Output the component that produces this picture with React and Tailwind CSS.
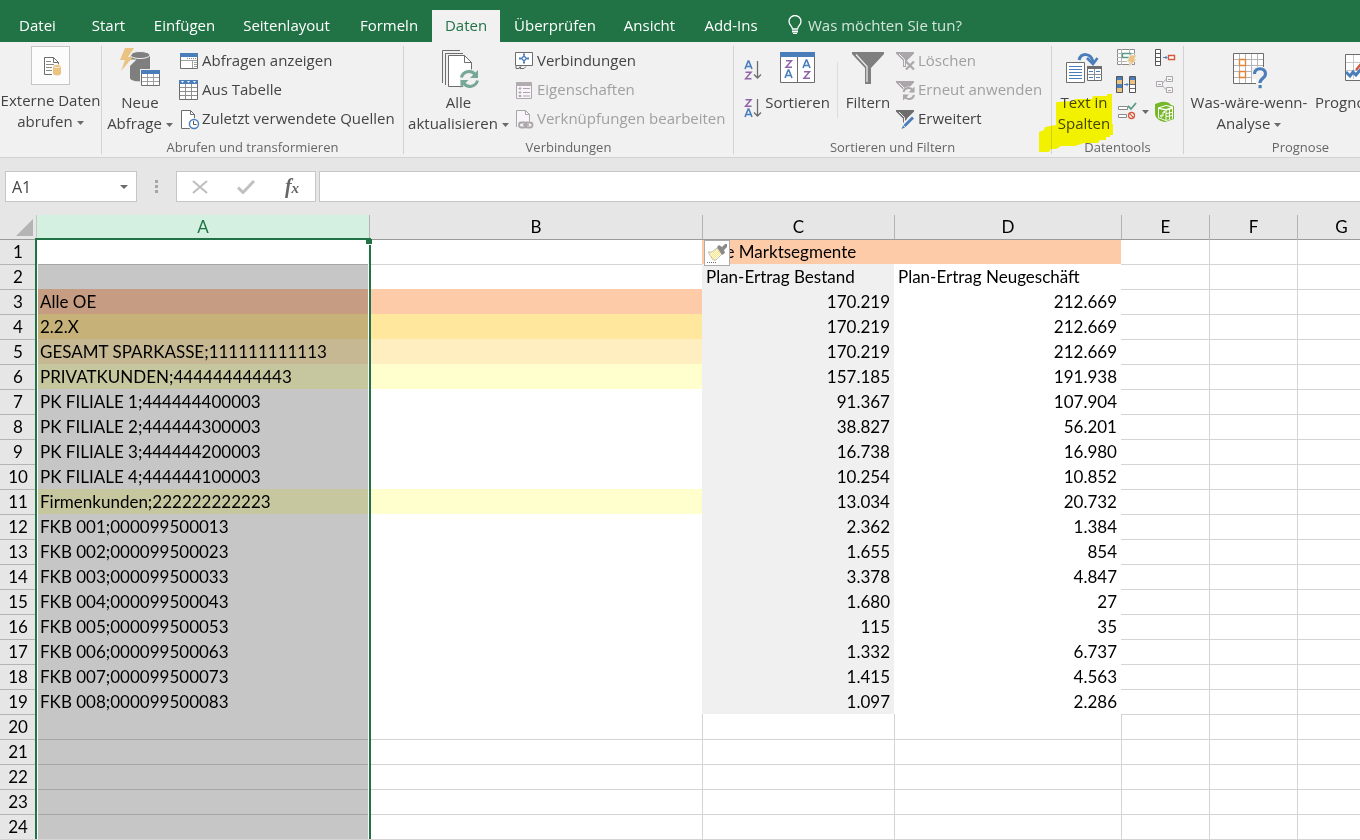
import React from 'react';

const tabs = [
  { name: 'Datei', style: 'w-[75px] bg-[#217346] text-white' },
  { name: 'Start', style: 'w-[67px] text-white' },
  { name: 'Einfügen', style: 'w-[85px] text-white' },
  { name: 'Seitenlayout', style: 'w-[119px] text-white' },
  { name: 'Formeln', style: 'w-[86px] text-white' },
  { name: 'Daten', style: 'w-[68px] bg-[#f1f1f1] text-[#217346]' },
  { name: 'Überprüfen', style: 'w-[110px] text-white' },
  { name: 'Ansicht', style: 'w-[79px] text-white' },
  { name: 'Add-Ins', style: 'w-[84px] text-white' },
];

const columns = ['A', 'B', 'C', 'D', 'E', 'F', 'G'];

const rows = [
  {},
  { c: 'Plan-Ertrag Bestand', d: 'Plan-Ertrag Neugeschäft' },
  { a: 'Alle OE', c: '170.219', d: '212.669', fillA: 'bg-[#c69c82]', fillB: 'bg-[#fecba8]' },
  { a: '2.2.X', c: '170.219', d: '212.669', fillA: 'bg-[#c6b279]', fillB: 'bg-[#ffe79d]' },
  { a: 'GESAMT SPARKASSE;111111111113', c: '170.219', d: '212.669', fillA: 'bg-[#c5b892]', fillB: 'bg-[#feeec0]' },
  { a: 'PRIVATKUNDEN;444444444443', c: '157.185', d: '191.938', fillA: 'bg-[#c6c69f]', fillB: 'bg-[#feffcd]' },
  { a: 'PK FILIALE 1;444444400003', c: '91.367', d: '107.904' },
  { a: 'PK FILIALE 2;444444300003', c: '38.827', d: '56.201' },
  { a: 'PK FILIALE 3;444444200003', c: '16.738', d: '16.980' },
  { a: 'PK FILIALE 4;444444100003', c: '10.254', d: '10.852' },
  { a: 'Firmenkunden;222222222223', c: '13.034', d: '20.732', fillA: 'bg-[#c6c69f]', fillB: 'bg-[#feffcd]' },
  { a: 'FKB 001;000099500013', c: '2.362', d: '1.384' },
  { a: 'FKB 002;000099500023', c: '1.655', d: '854' },
  { a: 'FKB 003;000099500033', c: '3.378', d: '4.847' },
  { a: 'FKB 004;000099500043', c: '1.680', d: '27' },
  { a: 'FKB 005;000099500053', c: '115', d: '35' },
  { a: 'FKB 006;000099500063', c: '1.332', d: '6.737' },
  { a: 'FKB 007;000099500073', c: '1.415', d: '4.563' },
  { a: 'FKB 008;000099500083', c: '1.097', d: '2.286' },
  {},
  {},
  {},
  {},
  {},
];

const Arrow = () => (
  <svg width="7" height="4" viewBox="0 0 7 4" className="ml-1 inline-block align-middle">
    <path d="M0 0h7L3.500 4z" fill="#6a6a6a" />
  </svg>
);

const ExternalDataIcon = () => (
  <svg width="39" height="39" viewBox="0 0 39 39">
    <rect x="0.500" y="0.500" width="38" height="38" fill="#fcfcfc" stroke="#c6c6c6" />
    <path d="M13.500 11.500h9l5 5v12h-14z" fill="#fff" stroke="#6d6d6d" />
    <path d="M22.500 11.500v5h5" fill="none" stroke="#6d6d6d" />
    <path d="M15 15.500h5M15 18.500h8M15 21.500h6M15 24.500h6" stroke="#8a8a8a" />
    <path d="M21 19h10v10H21z" fill="#fcfcfc" />
    <path d="M22 20v7.500c0 2.500 8 2.500 8 0V20z" fill="#eac282" />
    <ellipse cx="26" cy="20" rx="4" ry="1.500" fill="#eac282" stroke="#fff" strokeWidth="0.700" />
  </svg>
);

const NewQueryIcon = () => (
  <svg width="40" height="42" viewBox="0 0 40 42">
    <path d="M10 8v22c0 4.500 20 4.500 20 0V8z" fill="#7f7f7f" />
    <ellipse cx="20" cy="7" rx="10" ry="3.500" fill="#7f7f7f" stroke="#f1f1f1" />
    <path d="M4 0h12L8.500 11.500h8L0 28l4.500-13H0z" fill="#f1f1f1" />
    <path d="M5 0h9L8 9h5L1 23l4-11H0z" fill="#eac282" />
    <path d="M20 21h20v18H20z" fill="#f1f1f1" />
    <path d="M21.500 22.500h18v15h-18z" fill="#fff" stroke="#6d6d6d" />
    <path d="M21 22h19v4H21z" fill="#4a7ebb" />
    <path d="M22 29.500h17M22 33.500h17M27.500 26v11M33.500 26v11" stroke="#a0a0a0" />
  </svg>
);

const RefreshAllIcon = () => (
  <svg width="38" height="40" viewBox="0 0 38 40">
    <path d="M.500 33V.500H18" fill="none" stroke="#6d6d6d" />
    <path d="M3.500 35V3.500H21" fill="none" stroke="#6d6d6d" />
    <path d="M6.500 5.500h16l7 7v24h-23z" fill="#fff" stroke="#6d6d6d" />
    <path d="M22.500 5.500v7h7" fill="none" stroke="#6d6d6d" />
    <circle cx="27.500" cy="29" r="10" fill="#f1f1f1" />
    <path d="M19.500 27.500c1.500-6.500 10-8 14-2.500M35.500 30.500c-1.500 6.500-10 8-14 2.500" fill="none" stroke="#76a797" strokeWidth="3" />
    <path d="M36 20v8h-8zM18.500 38v-8h8z" fill="#76a797" />
  </svg>
);

const ShowQueriesIcon = () => (
  <svg width="24" height="24" viewBox="0 0 24 24">
    <path d="M2.500 4.500h17v15h-17z" fill="#fff" stroke="#6d6d6d" />
    <path d="M2 4h18v4H2z" fill="#4a7ebb" />
    <path d="M3 11.500h16M14.500 12v7" stroke="#a0a0a0" />
    <path d="M9 9.500h9" stroke="#8a8a8a" strokeDasharray="1 1" />
    <path d="M16 13.500h3M16 15.500h3M16 17.500h3" stroke="#a0a0a0" />
  </svg>
);

const FromTableIcon = () => (
  <svg width="24" height="24" viewBox="0 0 24 24">
    <path d="M1.500 2.500h18v19h-18z" fill="#fff" stroke="#6d6d6d" />
    <path d="M1 2h19v4H1z" fill="#4a7ebb" />
    <path d="M3 3h3L4.500 5zM9 3h3l-1.500 2zM15 3h3l-1.500 2z" fill="#fff" />
    <path d="M2 9.500h17M2 13.500h17M2 17.500h17M7.500 6v15M13.500 6v15" stroke="#8f8f8f" />
  </svg>
);

const RecentIcon = () => (
  <svg width="24" height="24" viewBox="0 0 24 24">
    <path d="M3.500 3.500h9l4 4v14h-13z" fill="#fff" stroke="#6d6d6d" />
    <path d="M12.500 3.500v4h4" fill="none" stroke="#6d6d6d" />
    <circle cx="16" cy="17" r="6" fill="#f1f1f1" />
    <circle cx="16" cy="17" r="4.500" fill="#fff" stroke="#4a7ebb" strokeWidth="1.400" />
    <path d="M15.500 14v3.500h3" fill="none" stroke="#555" />
  </svg>
);

const ConnectionsIcon = () => (
  <svg width="24" height="24" viewBox="0 0 24 24">
    <path d="M2.500 3.500h17v13h-17z" fill="#fff" stroke="#6d6d6d" />
    <path d="M3 17v2.500h3l1-2M8 17.500l-1 2h4l2-2" fill="none" stroke="#6d6d6d" />
    <path d="M11 7l2.500 2.500L11 12 8.500 9.500z" fill="none" stroke="#4a7ebb" strokeWidth="1.400" />
    <path d="M10 4.500h2v2h-2zM10 12.500h2v2h-2zM6 8.500h2v2H6zM14 8.500h2v2h-2z" fill="#4a7ebb" />
  </svg>
);

const PropertiesIcon = () => (
  <svg width="24" height="24" viewBox="0 0 24 24">
    <path d="M3.500 4.500h15v16h-15z" fill="#f8f4fa" stroke="#aaa6aa" />
    <path d="M3 4h16v4H3z" fill="#b0acb0" />
    <path d="M10 10.500h7M10 14.500h7M10 18h7" stroke="#aaa6aa" />
    <path d="M6 10h2v1H6zM6 14h2v1H6zM6 17.500h2v1H6z" fill="none" stroke="#aaa6aa" />
  </svg>
);

const EditLinksIcon = () => (
  <svg width="24" height="24" viewBox="0 0 24 24">
    <path d="M3.500 20V3.500h9l4 4V15" fill="#f8f4fa" stroke="#aaa6aa" />
    <path d="M12.500 3.500v4h4" fill="none" stroke="#aaa6aa" />
    <path d="M5 14h16v9H5z" fill="#f1f1f1" />
    <rect x="6" y="15.500" width="7.500" height="5" rx="2.500" fill="none" stroke="#aaa6aa" strokeWidth="1.800" />
    <rect x="12" y="15.500" width="7.500" height="5" rx="2.500" fill="none" stroke="#aaa6aa" strokeWidth="1.800" />
    <path d="M10 18h6" stroke="#aaa6aa" strokeWidth="1.500" />
  </svg>
);

const letterA = (x, y) => <path d={`M${x} ${y + 8}l3.200-8h.600l3.200 8M${x + 1.2} ${y + 5.5}h4.600`} fill="none" stroke="#4a7ebb" strokeWidth="1.600" />;
const letterZ = (x, y) => <path d={`M${x} ${y + 0.7}h5.500l-5.500 6.600h6`} fill="none" stroke="#8e63a8" strokeWidth="1.500" />;

const SortIcon = ({ down }) => (
  <svg width="18" height="22" viewBox="0 0 18 22">
    {down ? letterZ(1.5, 1) : letterA(1, 1)}
    {down ? letterA(1, 11) : letterZ(1.5, 11.5)}
    <path d="M13.500 1v17M10 14.500l3.500 3.500 3.500-3.500" fill="none" stroke="#6d6d6d" strokeWidth="1.300" />
  </svg>
);

const SortDialogIcon = () => (
  <svg width="36" height="32" viewBox="0 0 36 32">
    <path d="M.500.500h34v30H.500z" fill="#fff" stroke="#6d6d6d" />
    <path d="M0 0h35v5H0z" fill="#4a7ebb" />
    <path d="M17.500 5v25" stroke="#6d6d6d" />
    {letterZ(6, 8)}
    {letterA(5, 18)}
    {letterA(23, 8)}
    {letterZ(24, 19)}
  </svg>
);

const FilterIcon = () => (
  <svg width="34" height="34" viewBox="0 0 34 34">
    <path d="M1 1h32v2L20 17v16h-6V17L1 3z" fill="#7f7f7f" />
    <path d="M5 3.500L16 15.500V31" fill="none" stroke="#f1f1f1" strokeWidth="1.200" />
  </svg>
);

const SmallFilter = ({ color, children }) => (
  <svg width="24" height="24" viewBox="0 0 24 24">
    <path d="M2 3h18v1.500l-7 7V18h-4v-6.500L2 4.500z" fill={color} />
    <path d="M5 5l5.500 5.500V17" fill="none" stroke="#f1f1f1" />
    {children}
  </svg>
);

const ClearIcon = () => (
  <SmallFilter color="#aaa6aa">
    <path d="M12 12h9v9h-9z" fill="#f1f1f1" />
    <path d="M12 12.500l8 8M20 12.500l-8 8" stroke="#aaa6aa" strokeWidth="2.200" />
  </SmallFilter>
);

const ReapplyIcon = () => (
  <SmallFilter color="#aaa6aa">
    <circle cx="14.500" cy="15.500" r="7" fill="#f1f1f1" />
    <path d="M9.500 14c1-4.500 7-5.500 9.500-1.500M20 17c-1 4.500-7 5.500-9.500 1.500" fill="none" stroke="#aaa6aa" strokeWidth="2" />
    <path d="M20.500 8.500v6h-6zM9 22.500v-6h6z" fill="#aaa6aa" />
  </SmallFilter>
);

const AdvancedIcon = () => (
  <SmallFilter color="#6d6d6d">
    <path d="M6 22l2-5L17.500 7.500l4 4L11.500 21z" fill="#f1f1f1" />
    <path d="M9.500 18l8.500-8.500 2 2-8.500 8.500z" fill="#4a7ebb" />
    <path d="M7.500 22l1.500-3.500 2 2z" fill="#4a7ebb" />
  </SmallFilter>
);

const TextToColumnsIcon = () => (
  <svg width="37" height="33" viewBox="0 0 37 33">
    <path d="M.500 10.500h18v20h-18z" fill="#fff" stroke="#6d6d6d" />
    <path d="M3 14.500h13M3 17.500h13M3 20.500h13M3 23.500h13M3 26.500h13" stroke="#4a7ebb" />
    <path d="M21.500 14.500h14v14h-14z" fill="#fff" stroke="#6d6d6d" />
    <path d="M21 14h15v3H21z" fill="#6d6d6d" />
    <path d="M28.500 17v11M22 22.500h14" stroke="#8f8f8f" />
    <path d="M23 19.500h4M30 19.500h4M23 25.500h4M30 25.500h4" stroke="#4a7ebb" />
    <path d="M13 8C15 1 25 0 27 10" fill="none" stroke="#4a7ebb" strokeWidth="3" />
    <path d="M21 6l6 6 4.500-6" fill="none" stroke="#4a7ebb" strokeWidth="2.600" />
  </svg>
);

const FlashFillIcon = () => (
  <svg width="22" height="20" viewBox="0 0 22 20">
    <path d="M1.500 1.500h17v15h-17z" fill="#fff" stroke="#8a8a8a" />
    <path d="M1 5.500h18M1 9.500h18M1 13.500h18M5.500 1v16M13.500 1v16" stroke="#b5b5b5" />
    <path d="M6.500 5.500h8v4h-8z" fill="#fff" stroke="#5b9b85" strokeWidth="1.400" />
    <path d="M14 7h7l-3 4h3l-9 9 2.500-6H11z" fill="#eac282" stroke="#f1f1f1" strokeWidth="0.800" />
  </svg>
);

const RemoveDuplicatesIcon = () => (
  <svg width="22" height="20" viewBox="0 0 22 20">
    <path d="M.500 1.500h6v16h-6z" fill="#4a7ebb" stroke="#555" />
    <path d="M1 5h5v4H1zM1 13h5v4H1z" fill="#eac282" />
    <path d="M13.500 1.500h6v16h-6z" fill="#fff" stroke="#555" />
    <path d="M14 2h5v3h-5z" fill="#4a7ebb" />
    <path d="M14 5h5v4h-5z" fill="#eac282" />
    <path d="M14 9.500h5M14 13.500h5" stroke="#6d6d6d" />
    <path d="M8 9.500h4M10.500 8l1.500 1.500-1.500 1.500" fill="none" stroke="#4a7ebb" />
  </svg>
);

const ValidationIcon = () => (
  <svg width="22" height="20" viewBox="0 0 22 20">
    <path d="M2.500 4.500h9v3h-9zM2.500 12.500h8v3h-8z" fill="#fff" stroke="#8a8a8a" />
    <path d="M12 4l3 3 5-6" fill="none" stroke="#5b9b85" strokeWidth="1.800" />
    <circle cx="15.500" cy="13.500" r="4.500" fill="#f1f1f1" />
    <circle cx="15.500" cy="13.500" r="3" fill="#fff" stroke="#d4583c" strokeWidth="1.300" />
    <path d="M13.400 11.400l4.200 4.200" stroke="#d4583c" strokeWidth="1.300" />
  </svg>
);

const ConsolidateIcon = () => (
  <svg width="22" height="20" viewBox="0 0 22 20">
    <path d="M1.500 1.500h5v16h-5zM1.500 5.500h5M1.500 9.500h5M1.500 13.500h5" fill="#fff" stroke="#555" />
    <path d="M9 9.500h4M11.500 8l1.500 1.500-1.500 1.500" fill="none" stroke="#4a7ebb" />
    <path d="M14.500 7.500h6v4h-6z" fill="#fff" stroke="#d4583c" strokeWidth="1.400" />
  </svg>
);

const RelationsIcon = () => (
  <svg width="22" height="20" viewBox="0 0 22 20">
    <path d="M7 9.500l6-6M7 9.500l6 6" stroke="#aaa6aa" />
    <path d="M2.500 6.500h6v5h-6zM12.500 1.500h6v5h-6zM12.500 12.500h6v5h-6z" fill="#f8f4fa" stroke="#aaa6aa" />
    <path d="M4 9.500h3M14 4.500h3M14 15.500h3" stroke="#aaa6aa" />
  </svg>
);

const DataModelIcon = () => (
  <svg width="22" height="22" viewBox="0 0 22 22">
    <path d="M1 3l6-2c4-.800 8 0 10 3l3 1v13l-9 3C5 20 1 17 1 12z" fill="#76b82a" />
    <path d="M4 6.500l8-2.500 7 1.500v12L12 20l-8-3z" fill="#fff" />
    <path d="M5 8l6.500 1.500V19L5 16.500zM12.500 9.500L18 8v9.500L12.500 19z" fill="#76b82a" />
    <path d="M6 7l6-2 5 1.300-5 1.700z" fill="#76b82a" />
    <path d="M12 12.500l6-1M12 15.500l6-1M15.500 8.500V18" stroke="#fff" />
    <path d="M7 15h2v-4h2M7.500 13.500L6.500 15l1 1.500M10 10l1 1-1 1" fill="none" stroke="#fff" />
  </svg>
);

const WhatIfIcon = () => (
  <svg width="36" height="38" viewBox="0 0 36 38">
    <path d="M.500 1.500h30v30H.500z" fill="#fff" stroke="#6d6d6d" />
    <path d="M6.500 2v29M12.500 2v29M18.500 2v29M24.500 2v29M1 7.500h29M1 13.500h29M1 19.500h29M1 25.500h29" stroke="#b5b5b5" />
    <path d="M6.500 7.500h6v6h-6zM6.500 19.500h6v6h-6z" fill="#fff" stroke="#e0853a" strokeWidth="1.400" />
    <path d="M19 15h14v20H23v-8h-4z" fill="#f1f1f1" />
    <path d="M21.500 22c0-7 11-7 11 0 0 4.500-5.500 4-5.500 9" fill="none" stroke="#4a7ebb" strokeWidth="3.200" />
    <path d="M25.500 33h3.200v3.200h-3.200z" fill="#4a7ebb" />
  </svg>
);

const ForecastIcon = () => (
  <svg width="38" height="32" viewBox="0 0 38 32">
    <path d="M.500 2.500h36v26H.500z" fill="#fff" stroke="#6d6d6d" />
    <path d="M8.500 3v24M16.500 3v24M24.500 3v24M1 10.500h35M1 18.500h35" stroke="#c6c6c6" />
    <path d="M1 20l4 4 3-4 3 3 5-6" fill="none" stroke="#4a7ebb" strokeWidth="3" />
    <path d="M11 18l9-11 12-3" fill="none" stroke="#d4583c" strokeWidth="2.400" />
  </svg>
);

const PasteBrush = () => (
  <svg width="24" height="22" viewBox="0 0 24 22">
    <defs>
      <pattern id="bristles" width="2" height="2" patternUnits="userSpaceOnUse">
        <path d="M0 0h2v2H0z" fill="#fff" />
        <path d="M0 0h1v1H0zM1 1h1v1H1z" fill="#fbe36a" />
      </pattern>
    </defs>
    <path d="M3 10h4l5-4 5 6-6 6h-3z" fill="url(#bristles)" stroke="#c4c0b4" />
    <path d="M12 5l2-2 3 2 3-3h2v3l-3 3 1 3-3 2z" fill="#8a8a8a" />
    <path d="M2 20.500h9" stroke="#6d6d6d" strokeDasharray="1 1" />
  </svg>
);

const Group = ({ label, className, children }) => (
  <section className={`flex shrink-0 flex-col border-r border-[#d2d2d2] ${className}`}>
    <div className="flex h-[94px]">{children}</div>
    <h2 className="text-center text-[13px] leading-[14px] text-[#666666]">{label}</h2>
  </section>
);

const BigButton = ({ icon, className, children }) => (
  <button className={`flex shrink-0 flex-col items-center leading-[21px] whitespace-nowrap ${className}`}>
    <span className="flex h-[46px] items-start justify-center">{icon}</span>
    {children}
  </button>
);

const SmallButton = ({ icon, disabled, children }) => (
  <button disabled={disabled} className="flex h-[29px] items-center whitespace-nowrap disabled:text-[#a0a0a0]">
    {icon}
    {children}
  </button>
);

const Ribbon = () => (
  <div className="relative flex overflow-hidden border-b border-[#d2d2d2] bg-[#f1f1f1] pt-1 pb-[3px] text-[15px] text-[#444444]">
    <Group label="" className="w-[102px]">
      <button className="flex w-full flex-col items-center leading-[21px] whitespace-nowrap">
        <span className="flex h-11 items-start">
          <ExternalDataIcon />
        </span>
        <span>Externe Daten</span>
        <span>abrufen<Arrow /></span>
      </button>
    </Group>

    <Group label="Abrufen und transformieren" className="w-[302px]">
      <BigButton icon={<span className="pt-[2px]"><NewQueryIcon /></span>} className="w-[76px]">
        <span>Neue</span>
        <span>Abfrage<Arrow /></span>
      </BigButton>
      <div>
        <SmallButton icon={<ShowQueriesIcon />}>Abfragen anzeigen</SmallButton>
        <SmallButton icon={<FromTableIcon />}>Aus Tabelle</SmallButton>
        <SmallButton icon={<RecentIcon />}>Zuletzt verwendete Quellen</SmallButton>
      </div>
    </Group>

    <Group label="Verbindungen" className="w-[330px]">
      <BigButton icon={<span className="pt-1 pl-1"><RefreshAllIcon /></span>} className="w-[109px]">
        <span>Alle</span>
        <span>aktualisieren<Arrow /></span>
      </BigButton>
      <div>
        <SmallButton icon={<ConnectionsIcon />}>Verbindungen</SmallButton>
        <SmallButton icon={<PropertiesIcon />} disabled>Eigenschaften</SmallButton>
        <SmallButton icon={<EditLinksIcon />} disabled>Verknüpfungen bearbeiten</SmallButton>
      </div>
    </Group>

    <Group label="Sortieren und Filtern" className="w-[318px]">
      <div className="flex w-7 flex-col items-end gap-4 pt-[14px]">
        <button aria-label="Von A bis Z sortieren"><SortIcon /></button>
        <button aria-label="Von Z bis A sortieren"><SortIcon down /></button>
      </div>
      <BigButton icon={<span className="pt-[6px]"><SortDialogIcon /></span>} className="w-[71px]">
        <span>Sortieren</span>
      </BigButton>
      <div className="mx-1 mt-4 h-14 w-px shrink-0 bg-[#dcdcdc]" />
      <BigButton icon={<span className="pt-[5px]"><FilterIcon /></span>} className="w-[52px]">
        <span>Filtern</span>
      </BigButton>
      <div>
        <SmallButton icon={<ClearIcon />} disabled>Löschen</SmallButton>
        <SmallButton icon={<ReapplyIcon />} disabled>Erneut anwenden</SmallButton>
        <SmallButton icon={<AdvancedIcon />}>Erweitert</SmallButton>
      </div>
    </Group>

    <Group label="Datentools" className="w-[132px]">
      <BigButton icon={<span className="pt-[6px]"><TextToColumnsIcon /></span>} className="w-16">
        <span>Text in</span>
        <span>Spalten</span>
      </BigButton>
      <div className="flex flex-col">
        <button aria-label="Blitzvorschau" className="flex h-[27px] w-[38px] items-center pb-1"><FlashFillIcon /></button>
        <button aria-label="Duplikate entfernen" className="flex h-[27px] w-[38px] items-center pb-1"><RemoveDuplicatesIcon /></button>
        <button aria-label="Datenüberprüfung" className="flex h-[27px] w-[38px] items-center pb-1"><ValidationIcon /><Arrow /></button>
      </div>
      <div className="flex flex-col">
        <button aria-label="Konsolidieren" className="flex h-[27px] items-center pb-1"><ConsolidateIcon /></button>
        <button aria-label="Beziehungen" className="flex h-[27px] items-center pb-1"><RelationsIcon /></button>
        <button aria-label="Datenmodell verwalten" className="flex h-[27px] items-center pb-1"><DataModelIcon /></button>
      </div>
    </Group>

    <Group label="Prognose" className="w-[234px]">
      <BigButton icon={<span className="pt-[6px] pl-1"><WhatIfIcon /></span>} className="w-[130px]">
        <span>Was-wäre-wenn-</span>
        <span>Analyse<Arrow /></span>
      </BigButton>
      <BigButton icon={<span className="pt-[6px]"><ForecastIcon /></span>} className="w-[100px]">
        <span>Prognoseblatt</span>
      </BigButton>
    </Group>

    {/* Highlighter mark over "Text in Spalten" */}
    <svg width="74" height="60" viewBox="0 0 74 60" className="pointer-events-none absolute top-[51px] left-[1039px] mix-blend-multiply">
      <path d="M17 9l18-1 1-2h17l1-3h14V1h5v30h1v11h-3v2h-4v3h-6l-2 3H45l-9 3H22l-5 3h-5l-2 3H0V39l5-2 1-3 11-2z" fill="#ffff00" />
    </svg>
  </div>
);

const FormulaBar = () => (
  <div className="flex bg-[#e6e6e6] pt-[13px] pb-[13px] pl-[5px] text-[16px] text-[#444444]">
    <div className="flex h-[31px] w-[132px] shrink-0 items-center border border-[#c6c6c6] bg-white">
      <input aria-label="Namenfeld" defaultValue="A1" className="w-full min-w-0 pl-[6px] outline-none" />
      <button aria-label="Namenfeld öffnen" className="flex h-full w-6 shrink-0 items-center justify-center">
        <svg width="8" height="4" viewBox="0 0 8 4"><path d="M0 0h8L4 4z" fill="#6a6a6a" /></svg>
      </button>
    </div>
    <div className="flex w-[39px] shrink-0 flex-col items-center justify-center gap-[2px]">
      <span className="size-[3px] bg-[#a6a6a6]" />
      <span className="size-[3px] bg-[#a6a6a6]" />
      <span className="size-[3px] bg-[#a6a6a6]" />
    </div>
    <div className="flex w-[140px] shrink-0 items-center border border-[#c6c6c6] bg-white">
      <button aria-label="Abbrechen" className="flex w-[46px] justify-center">
        <svg width="16" height="14" viewBox="0 0 16 14"><path d="M1 1l14 12M15 1L1 13" stroke="#c0c0c0" strokeWidth="2.200" /></svg>
      </button>
      <button aria-label="Eingeben" className="flex w-[46px] justify-center">
        <svg width="18" height="14" viewBox="0 0 18 14"><path d="M1 7.500l5 5L17 1" fill="none" stroke="#c0c0c0" strokeWidth="3" /></svg>
      </button>
      <button aria-label="Funktion einfügen" className="w-[46px] text-center font-['Liberation_Serif',serif] text-[20px] leading-6 font-bold text-[#666666] italic">
        f<span className="text-[15px]">x</span>
      </button>
    </div>
    <input aria-label="Bearbeitungsleiste" className="ml-[3px] min-w-0 grow border border-r-0 border-[#c6c6c6] bg-white px-2 outline-none" />
  </div>
);

const Sheet = () => (
  <div className="relative overflow-hidden border-b border-[#d4d4d4] bg-white font-[Lato,sans-serif] text-[17px] text-black">
    <table className="w-full min-w-[1385px] table-fixed border-separate border-spacing-0">
      <colgroup>
        <col className="w-9" />
        <col className="w-[333px]" />
        <col className="w-[333px]" />
        <col className="w-[192px]" />
        <col className="w-[227px]" />
        <col className="w-[88px]" />
        <col className="w-[88px]" />
        <col className="w-[88px]" />
      </colgroup>
      <thead>
        <tr className="h-6 bg-[#e6e6e6]">
          <th className="p-0">
            <svg width="17" height="17" viewBox="0 0 17 17" className="ml-4"><path d="M17 0v17H0z" fill="#b4b4b4" /></svg>
          </th>
          {columns.map((name) => (
            <th
              key={name}
              scope="col"
              className={`border-l p-0 leading-6 font-normal ${name === 'A' ? 'border-[#c6c6c6] bg-[#d3f0e0] text-[#217346]' : 'border-[#b4b4b4]'}`}
            >
              {name}
            </th>
          ))}
        </tr>
      </thead>
      <tbody>
        {rows.map((row, i) => {
          const first = i === 0;
          const empty = i > 18;
          const line = first ? 'border-t border-t-[#9b9b9b]' : 'border-t border-t-[#d4d4d4]';
          const dataLine = i > 19 ? 'border-t border-t-[#d4d4d4]' : '';
          const side = empty ? 'border-l border-l-[#d4d4d4]' : '';
          return (
            <tr key={i} className="h-[25px] leading-6">
              <th scope="row" className={`border-t bg-[#e6e6e6] p-0 font-normal ${first ? 'border-t-[#9b9b9b]' : 'border-t-[#b4b4b4]'}`}>
                {i + 1}
              </th>
              <td className={`p-0 pt-px pl-1 whitespace-nowrap ${first ? 'bg-white' : row.fillA || 'bg-[#c6c6c6]'} ${i === 1 || i > 19 ? 'border-t border-t-[#a6a6a6] pt-0' : ''}`}>
                {row.a}
              </td>
              <td className={`p-0 ${row.fillB || 'bg-white'} ${i < 2 ? line : dataLine}`} />
              {first ? (
                <td colSpan={2} className="border-t border-t-[#9b9b9b] bg-[#fecba8] p-0 pl-1">
                  Alle Marktsegmente
                </td>
              ) : (
                <>
                  <td className={`p-0 px-1 whitespace-nowrap ${i > 1 ? 'text-right' : ''} ${empty ? '' : 'bg-[#f0f0f0] pt-px'} ${dataLine} ${side}`}>{row.c}</td>
                  <td className={`p-0 px-1 whitespace-nowrap ${i > 1 ? 'text-right' : ''} ${empty ? '' : 'pt-px'} ${dataLine} ${side}`}>{row.d}</td>
                </>
              )}
              <td className={`p-0 ${line} ${side}`} />
              <td className={`border-l border-l-[#d4d4d4] p-0 ${line}`} />
              <td className={`border-l border-l-[#d4d4d4] p-0 ${line}`} />
            </tr>
          );
        })}
      </tbody>
    </table>

    {/* Selection frame around column A */}
    <div className="pointer-events-none absolute top-[23px] -bottom-px left-[35px] w-[336px] border-2 border-b-0 border-[#217346]">
      <div className="h-full border-x border-white" />
      <span className="absolute -top-px -right-[3px] h-[6px] w-[6px] border-b border-white bg-[#217346]" />
    </div>
    {/* Paste options */}
    <button aria-label="Einfügeoptionen" className="absolute top-[25px] left-[704px] flex size-[26px] items-center justify-center border border-[#ababab] bg-white">
      <PasteBrush />
    </button>
  </div>
);

const App = () => {
  return (
    <div className="min-h-screen overflow-hidden bg-[#e6e6e6] font-['Open_Sans',sans-serif]">
      <div className="flex bg-[#217346] pt-[10px] text-[15px]">
        {tabs.map((tab) => (
          <button key={tab.name} className={`h-8 shrink-0 pb-[2px] whitespace-nowrap ${tab.style}`}>
            {tab.name}
          </button>
        ))}
        <label className="ml-[15px] flex grow items-center gap-1 pb-[2px]">
          <svg width="14" height="20" viewBox="0 0 14 20" className="shrink-0">
            <path d="M4.500 14c0-3-3.500-4-3.500-7.500a6 6 0 0 1 12 0C13 10 9.500 11 9.500 14z" fill="none" stroke="#fff" strokeWidth="1.300" />
            <path d="M4 15.500h6v2H4zM5 18h4v1H5z" fill="#fff" />
          </svg>
          <input aria-label="Was möchten Sie tun?" placeholder="Was möchten Sie tun?" className="w-full min-w-0 pl-[2px] text-white outline-none placeholder:text-[#d3e5da]" />
        </label>
      </div>
      <Ribbon />
      <FormulaBar />
      <Sheet />
    </div>
  );
};

export default App;
